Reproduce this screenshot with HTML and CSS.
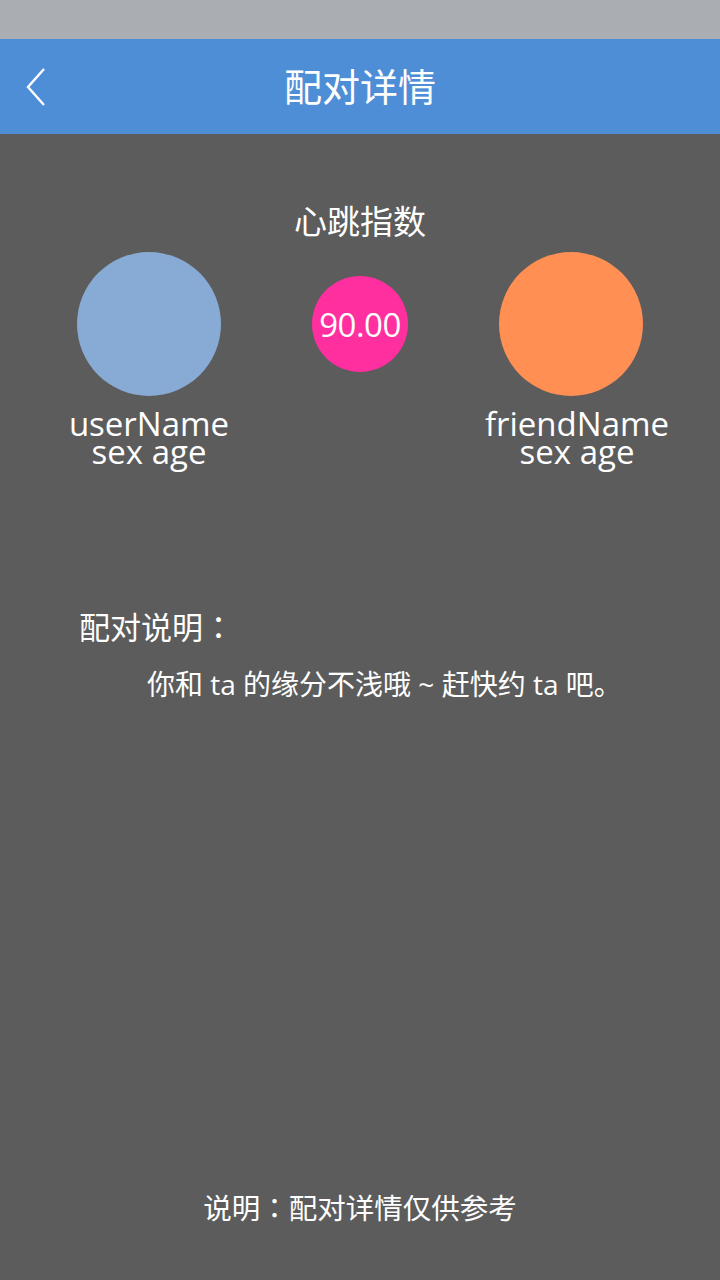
FILE: index.html
```html
<!DOCTYPE html>
<html lang="zh-CN">
<head>
<meta charset="utf-8">
<link rel="stylesheet" href="styles.css">
</head>
<body>
<div class="screen">
  <div class="statusbar"></div>
  <header class="topbar">
    <svg class="back" viewBox="0 0 24 40" width="24" height="40"><polyline points="20,2 4,20 20,38" fill="none" stroke="#fff" stroke-width="2.4" stroke-linejoin="miter"/></svg>
    <h1 class="title">配对详情</h1>
  </header>
  <main class="content">
    <div class="heart-title">心跳指数</div>
    <div class="pair">
      <div class="person">
        <div class="avatar avatar-user"></div>
        <div class="name">userName</div>
        <div class="meta">sex age</div>
      </div>
      <div class="score">90.00</div>
      <div class="person person-friend">
        <div class="avatar avatar-friend"></div>
        <div class="name">friendName</div>
        <div class="meta">sex age</div>
      </div>
    </div>
    <div class="desc">
      <div class="desc-label">配对说明<span class="colon" lang="zh-TW">：</span></div>
      <div class="desc-text">你和 ta 的缘分不浅哦 ~ 赶快约 ta 吧。</div>
    </div>
    <div class="footer-note">说明<span class="colon" lang="zh-TW">：</span>配对详情仅供参考</div>
  </main>
</div>
</body>
</html>
```
FILE: styles.css
```css
html, body {
  margin: 0;
  padding: 0;
}
body {
  font-family: "Open Sans", "Noto Sans CJK SC", sans-serif;
  color: #fff;
  background: #5c5c5c;
}
.screen {
  width: 720px;
  height: 1280px;
  display: flex;
  flex-direction: column;
  background: #5c5c5c;
}
.statusbar {
  height: 39px;
  background: #aaadb1;
}
.topbar {
  height: 95px;
  background: #4e8ed6;
  position: relative;
  display: flex;
  align-items: center;
  justify-content: center;
}
.back {
  position: absolute;
  left: 24px;
  top: 28px;
}
.title {
  margin: 0;
  font-family: "Noto Sans CJK SC", sans-serif;
  font-weight: 400;
  font-size: 38px;
  line-height: 40px;
  margin-top: -4px;
}
.content {
  flex: 1;
  display: flex;
  flex-direction: column;
}
.colon {
  font-family: "Noto Sans CJK TC", sans-serif;
}
.heart-title {
  margin-top: 66px;
  text-align: center;
  font-family: "Noto Sans CJK SC", sans-serif;
  font-size: 33px;
  line-height: 40px;
}
.pair {
  margin-top: 12px;
  display: flex;
  align-items: flex-start;
  padding-left: 57px;
}
.person {
  width: 184px;
  flex: none;
  display: flex;
  flex-direction: column;
  align-items: center;
}
.person-friend {
  margin-left: 71px;
}
.avatar {
  width: 144px;
  height: 144px;
  border-radius: 50%;
}
.avatar-user { background: #87abd4; }
.avatar-friend { background: #ff8f52; }
.name {
  margin-top: 14px;
  font-size: 33px;
  line-height: 28px;
  white-space: nowrap;
}
.meta {
  font-size: 33px;
  line-height: 28px;
  white-space: nowrap;
}
.person-friend .name,
.person-friend .meta {
  position: relative;
  left: 6px;
}
.score {
  flex: none;
  margin-top: 24px;
  margin-left: 71px;
  width: 96px;
  height: 96px;
  border-radius: 50%;
  background: #ff2f9f;
  display: flex;
  align-items: center;
  justify-content: center;
  font-size: 33px;
  letter-spacing: -0.5px;
}
.desc {
  margin-top: 140px;
  padding-left: 79px;
  font-family: "Noto Sans CJK SC", sans-serif;
}
.desc-label {
  font-size: 31px;
  line-height: 40px;
}
.desc-text {
  margin-top: 18px;
  padding-left: 68px;
  font-family: "Open Sans", "Noto Sans CJK SC", sans-serif;
  font-size: 28px;
  line-height: 40px;
}
.footer-note {
  margin-top: auto;
  margin-bottom: 53px;
  text-align: center;
  font-family: "Noto Sans CJK SC", sans-serif;
  font-size: 28.5px;
  line-height: 40px;
}
```
